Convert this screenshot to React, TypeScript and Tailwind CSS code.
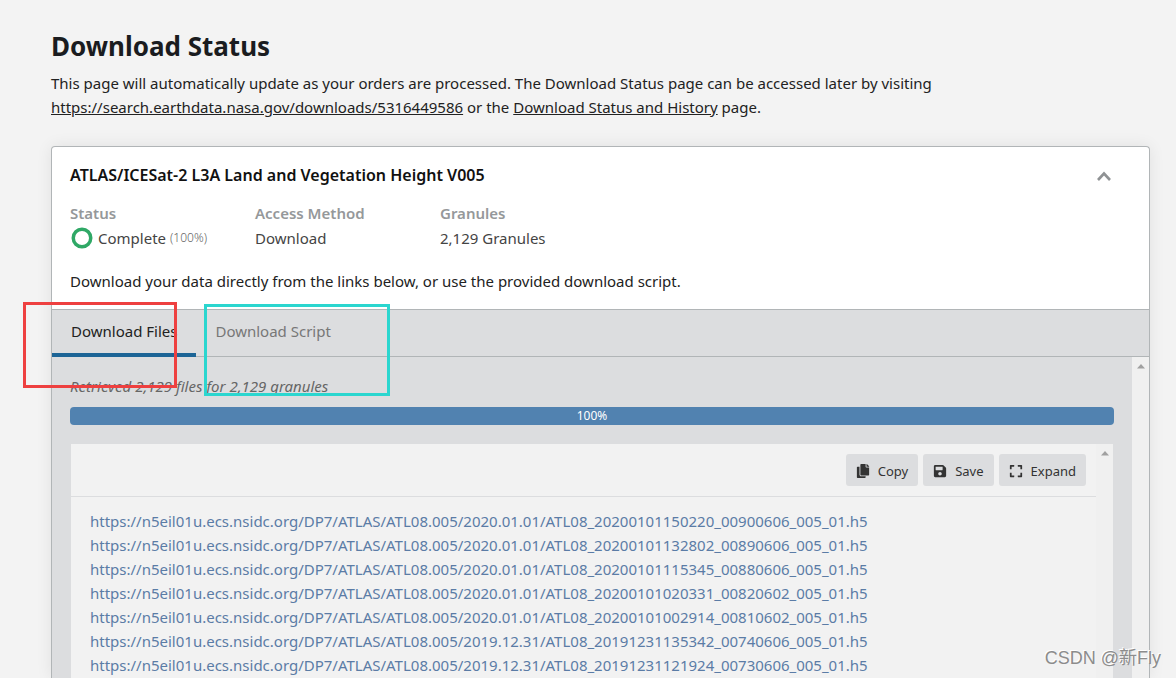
import { useState } from "react";
import { FaCopy, FaExpand, FaSave } from "react-icons/fa";

const BASE_URL = "https://n5eil01u.ecs.nsidc.org/DP7/ATLAS/ATL08.005";

const files = [
  "2020.01.01/ATL08_20200101150220_00900606_005_01.h5",
  "2020.01.01/ATL08_20200101132802_00890606_005_01.h5",
  "2020.01.01/ATL08_20200101115345_00880606_005_01.h5",
  "2020.01.01/ATL08_20200101020331_00820602_005_01.h5",
  "2020.01.01/ATL08_20200101002914_00810602_005_01.h5",
  "2019.12.31/ATL08_20191231135342_00740606_005_01.h5",
  "2019.12.31/ATL08_20191231121924_00730606_005_01.h5"
];

const tabs = ["Download Files", "Download Script"];

const actions = [
  { label: "Copy", Icon: FaCopy },
  { label: "Save", Icon: FaSave },
  { label: "Expand", Icon: FaExpand }
];

function ScrollTrack() {
  return (
    <div className="flex w-[17px] shrink-0 justify-center bg-[#f0f0f0] pt-[7px]">
      <svg width="8" height="5" viewBox="0 0 8 5" aria-hidden="true">
        <path d="M4 0 8 4.5H0z" fill="#a0a0a0" />
      </svg>
    </div>
  );
}

function StatusSummary() {
  return (
    <dl className="mt-[14px] flex">
      <div className="w-[185px]">
        <dt className="font-semibold text-[#95989a]">Status</dt>
        <dd className="flex items-center leading-[26px] text-[#444]">
          <svg className="mr-1 size-6" viewBox="0 0 24 24" aria-hidden="true">
            <circle cx="12" cy="12" r="8.75" fill="none" stroke="#2fa866" strokeWidth="3.5" />
          </svg>
          Complete
          <span className="ml-1 text-xs font-light text-[#666]">(100%)</span>
        </dd>
      </div>
      <div className="w-[185px]">
        <dt className="font-semibold text-[#95989a]">Access Method</dt>
        <dd className="leading-[26px] text-[#444]">Download</dd>
      </div>
      <div>
        <dt className="font-semibold text-[#95989a]">Granules</dt>
        <dd className="leading-[26px] text-[#444]">2,129 Granules</dd>
      </div>
    </dl>
  );
}

function FileList() {
  return (
    <div className="mt-[19px] flex min-h-0 flex-1 border-x border-[#dcdddf] bg-[#f2f2f2]">
      <div className="min-w-0 flex-1">
        <div className="flex justify-end gap-[5px] border-b border-[#dcdddf] px-[10px] py-[10px]">
          {actions.map(({ label, Icon }) => (
            <button
              key={label}
              type="button"
              className="flex h-8 items-center gap-2 rounded-[3px] bg-[#dcdddf] px-[10px] pt-0.5 text-[13px] text-[#333]"
            >
              <Icon className="size-[14px]" />
              {label}
            </button>
          ))}
        </div>
        <ul className="px-[19px] pt-3">
          {files.map((file) => (
            <li key={file}>
              <a href={`${BASE_URL}/${file}`} className="text-[#5b7ca6]">
                {`${BASE_URL}/${file}`}
              </a>
            </li>
          ))}
        </ul>
      </div>
      <ScrollTrack />
    </div>
  );
}

export default function App() {
  const [activeTab, setActiveTab] = useState(tabs[0]);

  return (
    <main className="relative flex h-screen flex-col overflow-hidden bg-[#f3f3f3] pt-7 pr-[26px] pl-[51px] font-['Noto_Sans',sans-serif] text-[15px] leading-6 text-[#222]">
      <h1 className="text-[26px] leading-9 font-bold text-[#1a1c20]">Download Status</h1>
      <p className="mt-[7px] max-w-[940px]">
        This page will automatically update as your orders are processed. The Download Status page
        can be accessed later by visiting{" "}
        <a href="https://search.earthdata.nasa.gov/downloads/5316449586" className="underline">
          https://search.earthdata.nasa.gov/downloads/5316449586
        </a>{" "}
        or the{" "}
        <a href="#history" className="underline">
          Download Status and History
        </a>{" "}
        page.
      </p>

      <section className="mt-[27px] flex min-h-0 flex-1 flex-col overflow-hidden rounded-t border border-b-0 border-[#b1b5b7] bg-white shadow-[0_0_16px_rgba(0,0,0,0.08)]">
        <header className="px-[18px] py-4">
          <div className="flex items-center justify-between">
            <h2 className="text-base leading-6 font-semibold text-[#111]">
              ATLAS/ICESat-2 L3A Land and Vegetation Height V005
            </h2>
            <button type="button" aria-label="Collapse" className="pt-0.5 pr-5 text-[#8f9294]">
              <svg width="14" height="10" viewBox="0 0 14 10" aria-hidden="true">
                <path d="M1 9 7 2.5 13 9" fill="none" stroke="currentColor" strokeWidth="2.6" />
              </svg>
            </button>
          </div>
          <StatusSummary />
          <p className="mt-[18px]">
            Download your data directly from the links below, or use the provided download script.
          </p>
        </header>

        <div role="tablist" className="flex h-12 shrink-0 border-y border-[#b1b5b7] bg-[#dcdddf]">
          {tabs.map((tab) => (
            <button
              key={tab}
              type="button"
              role="tab"
              aria-selected={tab === activeTab}
              onClick={() => setActiveTab(tab)}
              className={
                tab === activeTab
                  ? "-mb-px border-b-4 border-[#1c6496] px-[19px] pb-0.5 text-[#222]"
                  : "-mb-px border-b-4 border-transparent px-[19px] pb-0.5 text-[#777]"
              }
            >
              {tab}
            </button>
          ))}
        </div>

        <div className="flex min-h-0 flex-1 bg-[#dcdddf]">
          <div className="flex min-w-0 flex-1 flex-col px-[18px] pt-[17px]">
            <p className="text-[#666] italic">Retrieved 2,129 files for 2,129 granules</p>
            <div
              role="progressbar"
              aria-label="Files retrieved"
              aria-valuenow={100}
              className="mt-[9px] h-[18px] shrink-0 rounded bg-[#5182b0] text-center text-xs leading-[18px] text-white"
            >
              100%
            </div>
            <FileList />
          </div>
          <ScrollTrack />
        </div>
      </section>

      {/* callouts drawn over the two tabs */}
      <div className="pointer-events-none absolute top-[302px] left-[23px] h-[86px] w-[154px] border-3 border-[#ee4040]" />
      <div className="pointer-events-none absolute top-[304px] left-[204px] h-[92px] w-[186px] border-3 border-[#2bd6cf]" />

      <span className="pointer-events-none absolute right-[15px] bottom-2 font-['Liberation_Sans','Noto_Sans_CJK_SC',sans-serif] text-lg leading-6 text-[#8c8c8c] [text-shadow:-1px_-1px_0_#fff]">
        CSDN @新Fly
      </span>
    </main>
  );
}
